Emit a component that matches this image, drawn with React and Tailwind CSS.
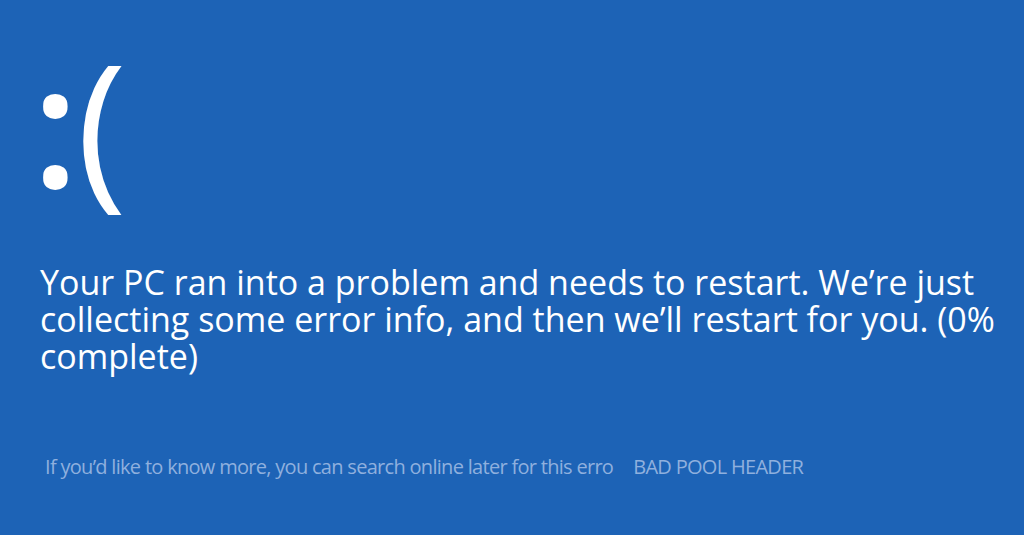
import React from "react";

const App = () => {
    return (
        <div
            className="w-[1024px] h-[535px] overflow-hidden bg-[#1d63b6] text-white"
            style={{ fontFamily: '"Open Sans", "Noto Sans", sans-serif' }}
        >
            <div className="pl-[36px] pt-[22px]">
                {/* Sad face */}
                <div className="h-[200px] text-[170px] leading-[200px] flex">
                    <span className="font-semibold -ml-[4px]">:</span>
                    <span className="font-normal -ml-[2px]">(</span>
                </div>

                {/* Main message */}
                <p className="mt-[42px] text-[34px] leading-[37px] pl-[4px] whitespace-nowrap">
                    Your PC ran into a problem and needs to restart. We’re just<br />
                    collecting some error info, and then we’ll restart for you. (0%<br />
                    complete)
                </p>

                {/* Stop code line */}
                <div className="mt-[78px] pl-[9px] flex items-center gap-[20px] text-[20px] leading-[27px] text-[#8fb0de] tracking-[-0.7px]">
                    <span>If you’d like to know more, you can search online later for this erro</span>
                    <span>BAD POOL HEADER</span>
                </div>
            </div>
        </div>
    );
};

export default App;
